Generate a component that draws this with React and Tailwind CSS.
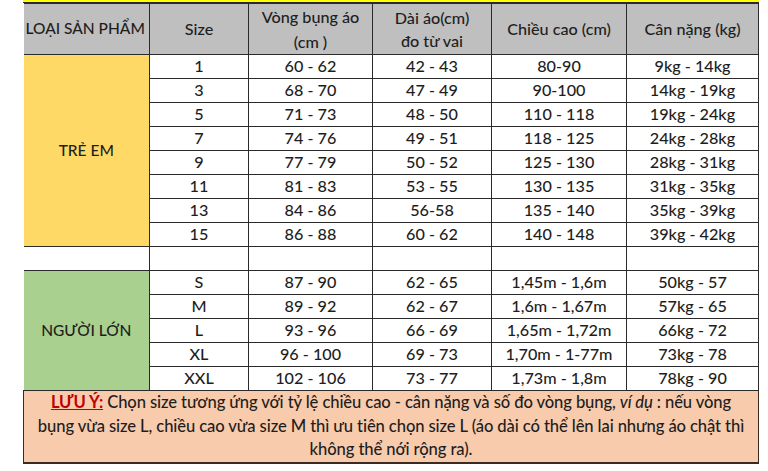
const kids = [
  ['1', '60 - 62', '42 - 43', '80-90', '9kg - 14kg'],
  ['3', '68 - 70', '47 - 49', '90-100', '14kg - 19kg'],
  ['5', '71 - 73', '48 - 50', '110 - 118', '19kg - 24kg'],
  ['7', '74 - 76', '49 - 51', '118 - 125', '24kg - 28kg'],
  ['9', '77 - 79', '50 - 52', '125 - 130', '28kg - 31kg'],
  ['11', '81 - 83', '53 - 55', '130 - 135', '31kg - 35kg'],
  ['13', '84 - 86', '56-58', '135 - 140', '35kg - 39kg'],
  ['15', '86 - 88', '60 - 62', '140 - 148', '39kg - 42kg'],
];

const adults = [
  ['S', '87 - 90', '62 - 65', '1,45m - 1,6m', '50kg - 57'],
  ['M', '89 - 92', '62 - 67', '1,6m - 1,67m', '57kg - 65'],
  ['L', '93 - 96', '66 - 69', '1,65m - 1,72m', '66kg - 72'],
  ['XL', '96 - 100', '69 - 73', '1,70m - 1-77m', '73kg - 78'],
  ['XXL', '102 - 106', '73 - 77', '1,73m - 1,8m', '78kg - 90'],
];

const cell = 'border border-[#2a2a2a] p-0 text-center align-middle';

function Group({ label, bg, rows }) {
  return rows.map((r, i) => (
    <tr key={r[0]} className="h-[24px]">
      {i === 0 && (
        <td
          rowSpan={rows.length}
          className={`border-y border-r border-[#2a2a2a] text-center align-middle text-[15.5px] ${bg}`}
        >
          {label}
        </td>
      )}
      {r.map((v, j) => (
        <td key={j} className={`${cell} bg-white`}>
          {v}
        </td>
      ))}
    </tr>
  ));
}

export default function App() {
  return (
    <div className="w-[768px] h-[471px] bg-white pl-[23px] pr-[9px] text-[#1e1e1e] text-[16.2px] font-medium leading-none font-['Lato','Noto_Sans',sans-serif]">
      <div className="h-[3px] bg-[#ffff00] border-b border-[#2a2a2a]" />
      <table className="w-full table-fixed border-collapse">
        <colgroup>
          <col className="w-[126px]" />
          <col className="w-[99px]" />
          <col className="w-[124px]" />
          <col className="w-[119px]" />
          <col className="w-[135px]" />
          <col />
        </colgroup>
        <tbody>
          <tr className="h-[48px] bg-[#bfbfbf]">
            <td className="border-y border-r border-[#2a2a2a] text-left pl-[2px] align-middle text-[15.5px] whitespace-nowrap">
              LOẠI SẢN PHẨM
            </td>
            <td className={cell}>Size</td>
            <td className={`${cell} leading-[25px]`}>
              Vòng bụng áo
              <br />
              (cm )
            </td>
            <td className={`${cell} leading-[23px]`}>
              Dài áo(cm)
              <br />
              đo từ vai
            </td>
            <td className={cell}>Chiều cao (cm)</td>
            <td className={cell}>Cân nặng (kg)</td>
          </tr>
          <Group label="TRẺ EM" bg="bg-[#ffd966]" rows={kids} />
          <tr className="h-[24px]">
            <td className="border-y border-r border-[#2a2a2a] bg-white" />
            {[0, 1, 2, 3, 4].map((j) => (
              <td key={j} className={`${cell} bg-white`} />
            ))}
          </tr>
          <Group label="NGƯỜI LỚN" bg="bg-[#a9d08e]" rows={adults} />
          <tr>
            <td
              colSpan={6}
              className="h-[68px] border border-b-2 border-[#3a2a20] bg-[#f8cbad] text-center align-middle leading-[23.5px] text-[16.6px] whitespace-nowrap tracking-[-0.1px]"
            >
              <span className="font-bold text-[#c00000] underline">LƯU Ý:</span> Chọn size tương ứng với tỷ lệ chiều cao - cân nặng và số đo vòng bụng,{' '}
              <i>ví dụ</i> : nếu vòng
              <br />
              bụng vừa size L, chiều cao vừa size M thì ưu tiên chọn size L (áo dài có thể lên lai nhưng áo chật thì
              <br />
              không thể nới rộng ra).
            </td>
          </tr>
        </tbody>
      </table>
    </div>
  );
}
